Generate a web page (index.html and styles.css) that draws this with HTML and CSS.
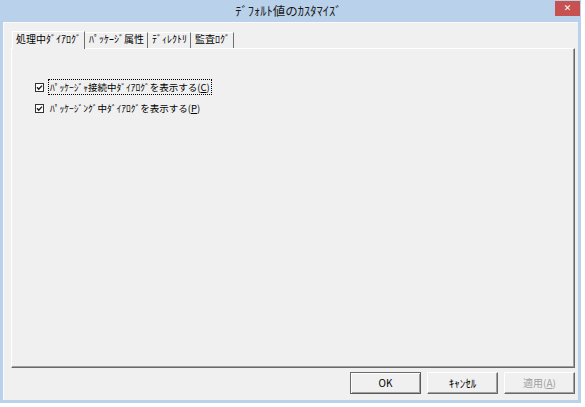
FILE: index.html
```html
<!DOCTYPE html>
<html lang="ja">
<head>
<meta charset="utf-8">
<title>ﾃﾞﾌｫﾙﾄ値のｶｽﾀﾏｲｽﾞ</title>
<link rel="stylesheet" href="styles.css">
</head>
<body>
<div class="window">
  <div class="titlebar">
    <span class="title">ﾃﾞﾌｫﾙﾄ値のｶｽﾀﾏｲｽﾞ</span>
    <span class="close">&#x2715;</span>
  </div>
  <div class="client">
    <div class="tabs">
      <div class="tab active">処理中ﾀﾞｲｱﾛｸﾞ</div>
      <div class="tab">ﾊﾟｯｹｰｼﾞ属性</div>
      <div class="tab">ﾃﾞｨﾚｸﾄﾘ</div>
      <div class="tab">監査ﾛｸﾞ</div>
    </div>
    <div class="panel">
      <div class="check">
        <svg class="box" width="9" height="9" viewBox="0 0 9 9"><rect x="0.5" y="0.5" width="8" height="8" fill="#fff" stroke="#333"/><polyline points="2,4.3 3.7,6.2 7,2.6" fill="none" stroke="#1a1a1a" stroke-width="1.4"/></svg>
        <span class="label focus">ﾊﾟｯｹｰｼﾞｬ接続中ﾀﾞｲｱﾛｸﾞを表示する(<u>C</u>)</span>
      </div>
      <div class="check">
        <svg class="box" width="9" height="9" viewBox="0 0 9 9"><rect x="0.5" y="0.5" width="8" height="8" fill="#fff" stroke="#333"/><polyline points="2,4.3 3.7,6.2 7,2.6" fill="none" stroke="#1a1a1a" stroke-width="1.4"/></svg>
        <span class="label">ﾊﾟｯｹｰｼﾞﾝｸﾞ中ﾀﾞｲｱﾛｸﾞを表示する(<u>P</u>)</span>
      </div>
    </div>
    <div class="buttons">
      <div class="btn default">OK</div>
      <div class="btn wide">ｷｬﾝｾﾙ</div>
      <div class="btn disabled">適用(<u>A</u>)</div>
    </div>
  </div>
</div>
</body>
</html>
```
FILE: styles.css
```css
* { box-sizing: border-box; }
html, body { margin: 0; padding: 0; background: #ffffff; }
body {
  font-family: "Noto Sans CJK JP", "Noto Sans", sans-serif;
  font-size: 10px;
  color: #000;
}
.window {
  width: 581px;
  height: 403px;
  background: #b9d1ea;
  padding: 0 3px 3px 3px;
  display: flex;
  flex-direction: column;
}
.titlebar {
  position: relative;
  height: 22px;
  display: flex;
  align-items: center;
  justify-content: center;
  flex: none;
}
.title {
  font-size: 12.5px;
  line-height: 22px;
  color: #1a1a1a;
  margin-left: -4px;
}
.close {
  position: absolute;
  top: 1px;
  right: -2px;
  width: 25px;
  height: 15px;
  background: #c75050;
  color: #fff;
  font-family: "DejaVu Sans", sans-serif;
  font-size: 9px;
  font-weight: bold;
  line-height: 15px;
  text-align: center;
}
.client {
  flex: 1;
  background: #f0f0f0;
  padding: 8px 3px 6px 7px;
  display: flex;
  flex-direction: column;
  border-top: 1px solid #fafafa;
  border-left: 1px solid #fafafa;
}
.tabs {
  height: 17px;
  display: flex;
  align-items: flex-end;
  padding-left: 1px;
  flex: none;
}
.tab {
  height: 16px;
  line-height: 11px;
  padding: 0 3px 0 4px;
  border-right: 1px solid #6f6f6f;
  border-top: 1px solid #fff;
  white-space: nowrap;
}
.tab.active {
  height: 18px;
  line-height: 13px;
  padding-left: 3px;
  border-left: 1px solid #fff;
  margin-bottom: -1px;
  background: #f0f0f0;
  position: relative;
}
.panel {
  height: 320px;
  border: 1px solid;
  border-color: #fff #696969 #696969 #fff;
  box-shadow: inset -1px -1px 0 #a0a0a0;
  padding: 30px 0 0 23px;
  display: flex;
  flex-direction: column;
  gap: 5px;
  flex: none;
}
.check {
  height: 16px;
  display: flex;
  align-items: center;
  gap: 4px;
}
.box { flex: none; }
.label {
  height: 16px;
  line-height: 14px;
  font-size: 9.5px;
  padding: 0 1px;
  border: 1px solid transparent;
  white-space: nowrap;
}
.label.focus {
  border: 1px dotted #000;
}
.buttons {
  margin-top: 4px;
  display: flex;
  justify-content: flex-end;
  gap: 6px;
}
.btn {
  width: 71px;
  height: 22px;
  line-height: 20px;
  text-align: center;
  background: #f0f0f0;
  border: 1px solid;
  border-color: #fff #696969 #696969 #fff;
  box-shadow: inset -1px -1px 0 #a0a0a0;
}
.btn.wide {
  font-size: 11px;
}
.btn.default {
  border-color: #6a6a6a #5a5a5a #5a5a5a #6a6a6a;
  box-shadow: inset 1px 1px 0 #fff, inset -1px -1px 0 #a0a0a0;
}
.btn.disabled {
  color: #a0a0a0;
}
```
